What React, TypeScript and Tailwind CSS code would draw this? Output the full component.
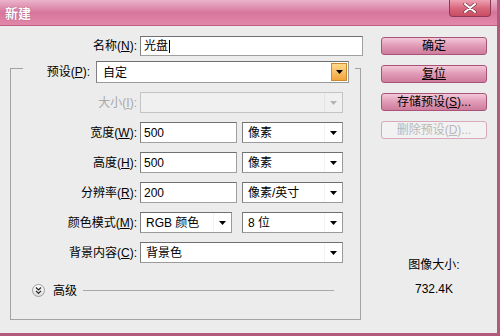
import React from 'react';

function Arrow({ color = '#000' }: { color?: string }) {
  return (
    <svg width="7" height="4" viewBox="0 0 7 4">
      <path d="M0 0h7L3.5 4z" fill={color} />
    </svg>
  );
}

function Select({ width, value, disabled }: { width: string; value?: string; disabled?: boolean }) {
  return (
    <div
      className={`flex h-[21px] ${width} border ${
        disabled ? 'border-[#c4c4c4] bg-[#f0f0f0]' : 'border-[#9a9a9a] border-t-[#6f6f6f] border-l-[#7f7f7f] bg-white'
      }`}
    >
      <div className="flex-1 flex items-center pl-[5px] pt-px">{value}</div>
      <div
        className={`w-[18px] flex items-center justify-center border-l ${
          disabled ? 'border-[#e4e4e4]' : 'border-[#f3f3f3]'
        }`}
      >
        <Arrow color={disabled ? '#b4b4b4' : '#000'} />
      </div>
    </div>
  );
}

function Field({ width, value }: { width: string; value: string }) {
  return (
    <div
      className={`flex items-center h-[21px] ${width} border border-[#a0a0a0] border-t-[#707070] border-l-[#808080] bg-white pl-[3px] pt-px`}
    >
      {value}
    </div>
  );
}

function Label({ children, disabled }: { children: React.ReactNode; disabled?: boolean }) {
  return (
    <div className={`w-[129px] shrink-0 text-right pr-[3px] ${disabled ? 'text-[#a8a8a8]' : 'text-black'}`}>
      {children}
    </div>
  );
}

function Btn({ children, disabled }: { children: React.ReactNode; disabled?: boolean }) {
  return (
    <div
      className={`h-[18px] w-[106px] flex items-center justify-center rounded-[3px] border ${
        disabled
          ? 'border-[#d7a9bb] bg-[#f2f2f2] text-[#b8b8b8]'
          : 'border-[#a85478] bg-gradient-to-b from-[#f3c8d8] via-[#e09ab5] to-[#cf7c9d] text-black'
      }`}
    >
      {children}
    </div>
  );
}

export default function App() {
  return (
    <div className="w-[500px] h-[336px] overflow-hidden bg-[#ececec] border-r-[3px] border-b-[3px] border-[#b35a7c] text-[12px] leading-none font-['Liberation_Sans','Noto_Sans_CJK_SC',sans-serif] flex flex-col">
      {/* title bar */}
      <div className="h-[26px] shrink-0 flex items-start justify-between bg-gradient-to-b from-[#eab3cb] via-[#d7769c] to-[#e288a9] border-b border-[#c45d84]">
        <div className="pl-[5px] pt-[7px] text-[13px] font-bold text-white [text-shadow:0_0_1px_#8a3a5a]">新建</div>
        <div className="mr-[6px] w-[42px] h-[17px] flex items-center justify-center rounded-b-[4px] border border-t-0 border-[#8e3a55] bg-gradient-to-b from-[#eea1b4] via-[#d8687f] to-[#c84d62]">
          <svg width="14" height="10" viewBox="0 0 14 10">
            <path d="M2 1L12 9M12 1L2 9" stroke="#7a3a4a" strokeWidth="3.4" strokeLinecap="round" />
            <path d="M2 1L12 9M12 1L2 9" stroke="#fff" strokeWidth="2" strokeLinecap="round" />
          </svg>
        </div>
      </div>

      <div className="flex flex-1">
        {/* left column */}
        <div className="w-[372px] shrink-0 flex flex-col pt-[10px]">
          <div className="flex items-center h-[20px]">
            <div className="w-[140px] text-right pr-[3px]">
              名称(<u>N</u>):
            </div>
            <div className="flex items-center h-[20px] w-[223px] border border-[#a0a0a0] border-t-[#707070] border-l-[#808080] bg-white pl-[3px]">
              光盘<span className="ml-px w-px h-[13px] bg-black" />
            </div>
          </div>

          <div className="ml-[10px] mt-[12px] w-[351px] h-[252px] border border-[#a3a3a3] flex flex-col">
            {/* preset row sits on the border line */}
            <div className="-mt-[8px] ml-[12px] w-[332px] h-[22px] bg-[#ececec] flex items-center">
              <div className="w-[73px] text-right pr-[6px]">
                预设(<u>P</u>):
              </div>
              <div className="flex h-[22px] w-[253px] border border-[#9a9a9a] border-t-[#6f6f6f] border-l-[#7f7f7f] bg-white">
                <div className="flex-1 flex items-center pl-[6px] pt-px">自定</div>
                <div className="w-[16px] my-px mr-px flex items-center justify-center border border-[#c98a32] bg-gradient-to-b from-[#ffd98a] to-[#f1a53a]">
                  <Arrow />
                </div>
              </div>
            </div>

            <div className="flex flex-col gap-[9px] mt-[9px]">
              <div className="flex items-center">
                <Label disabled>
                  大小(<u>I</u>):
                </Label>
                <Select width="w-[203px]" disabled />
              </div>
              <div className="flex items-center">
                <Label>
                  宽度(<u>W</u>):
                </Label>
                <Field width="w-[97px]" value="500" />
                <div className="ml-[5px]">
                  <Select width="w-[101px]" value="像素" />
                </div>
              </div>
              <div className="flex items-center">
                <Label>
                  高度(<u>H</u>):
                </Label>
                <Field width="w-[97px]" value="500" />
                <div className="ml-[5px]">
                  <Select width="w-[101px]" value="像素" />
                </div>
              </div>
              <div className="flex items-center">
                <Label>
                  分辨率(<u>R</u>):
                </Label>
                <Field width="w-[97px]" value="200" />
                <div className="ml-[5px]">
                  <Select width="w-[101px]" value="像素/英寸" />
                </div>
              </div>
              <div className="flex items-center">
                <Label>
                  颜色模式(<u>M</u>):
                </Label>
                <Select width="w-[92px]" value="RGB 颜色" />
                <div className="ml-[10px]">
                  <Select width="w-[101px]" value="8 位" />
                </div>
              </div>
              <div className="flex items-center">
                <Label>
                  背景内容(<u>C</u>):
                </Label>
                <Select width="w-[203px]" value="背景色" />
              </div>
            </div>

            <div className="flex items-center mt-[21px] ml-[21px]">
              <div className="w-[13px] h-[13px] rounded-full border border-[#9c9c9c] bg-gradient-to-b from-white to-[#dcdcdc] flex items-center justify-center">
                <svg width="7" height="7" viewBox="0 0 7 7">
                  <path d="M1 0.5L3.5 3L6 0.5M1 3.8L3.5 6.3L6 3.8" stroke="#222" strokeWidth="1.2" fill="none" />
                </svg>
              </div>
              <div className="ml-[8px]">高级</div>
              <div className="ml-[6px] w-[251px] h-px bg-[#a8a8a8]" />
            </div>
          </div>
        </div>

        {/* right column */}
        <div className="flex-1 flex flex-col items-start pt-[11px] pl-[9px]">
          <div className="flex flex-col gap-[10px]">
            <Btn>确定</Btn>
            <Btn>
              <u>复位</u>
            </Btn>
            <Btn>
              存储预设(<u>S</u>)...
            </Btn>
            <Btn disabled>
              删除预设(<u>D</u>)...
            </Btn>
          </div>
          <div className="mt-[120px] w-[106px] flex flex-col items-center gap-[12px]">
            <div>图像大小:</div>
            <div>732.4K</div>
          </div>
        </div>
      </div>
    </div>
  );
}
